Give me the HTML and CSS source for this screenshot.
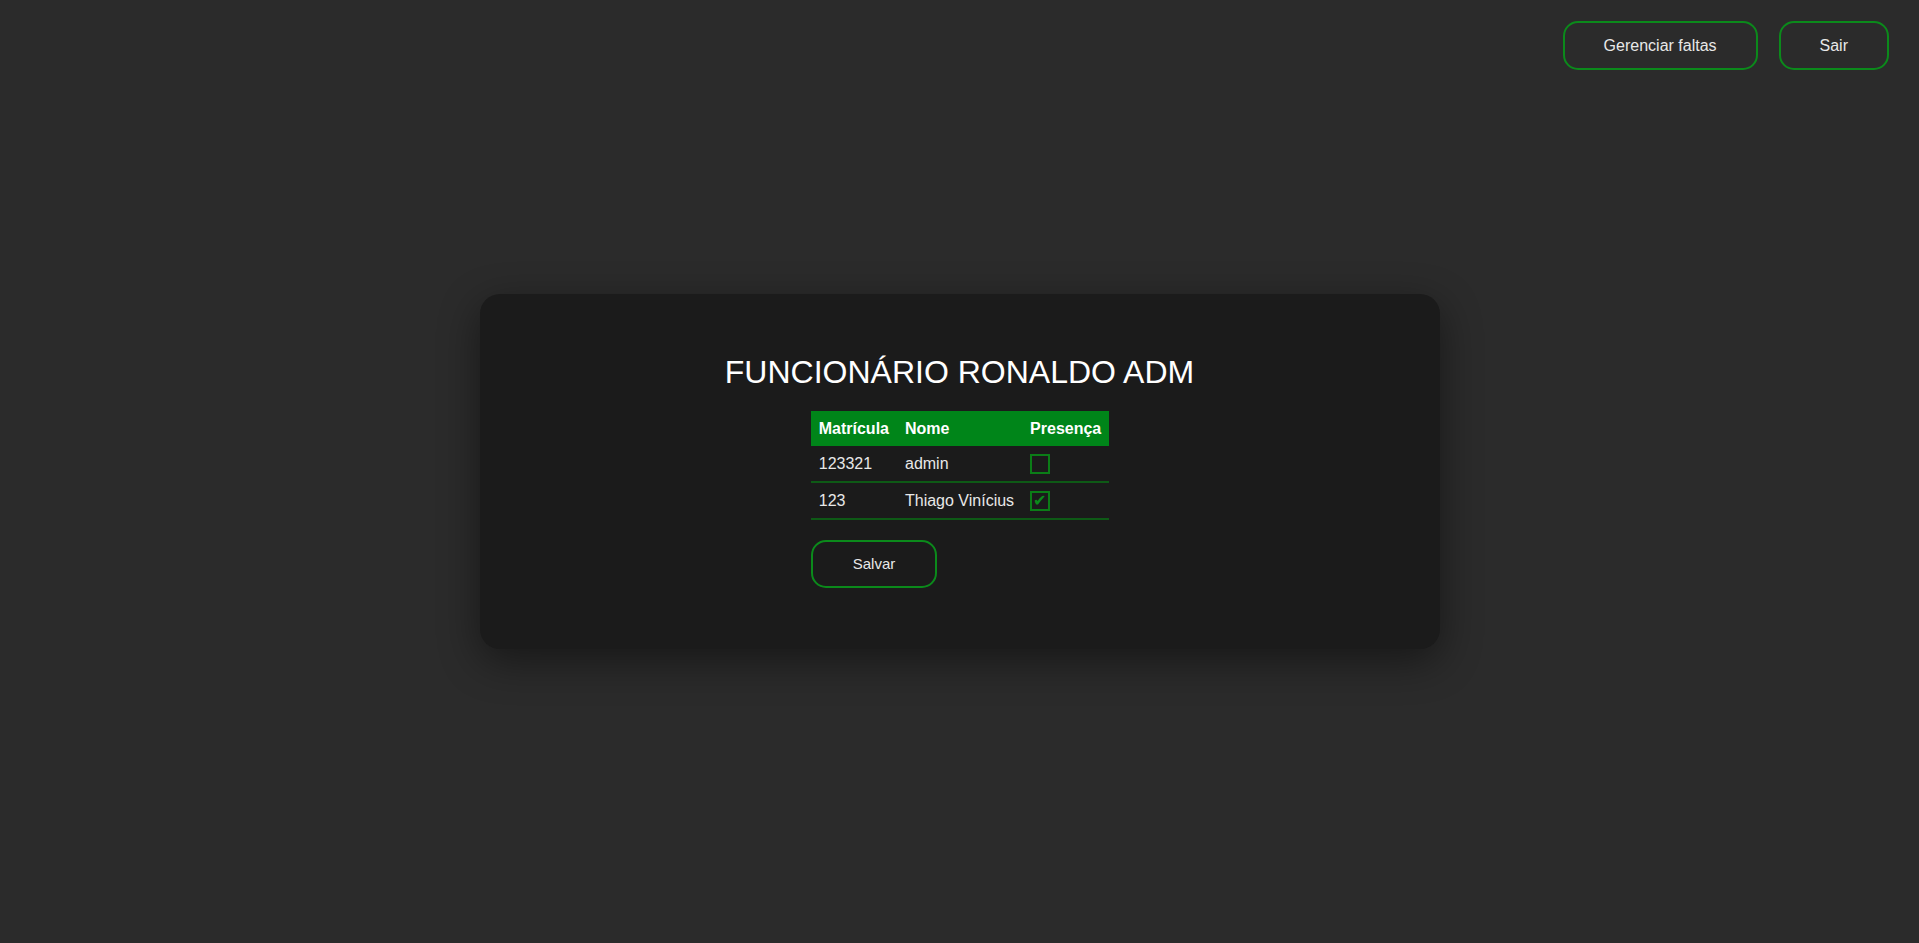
FILE: index.html
```html
<!DOCTYPE html>
<html lang="pt-BR">
<head>
<meta charset="utf-8">
<title>Presença</title>
<link rel="stylesheet" href="styles.css">
</head>
<body>
<header class="topbar">
  <button class="btn" type="button">Gerenciar faltas</button>
  <button class="btn" type="button">Sair</button>
</header>
<main class="stage">
  <section class="card">
    <h1 class="title">FUNCIONÁRIO RONALDO ADM</h1>
    <form class="attendance">
      <table class="grid">
        <thead>
          <tr><th>Matrícula</th><th>Nome</th><th>Presença</th></tr>
        </thead>
        <tbody>
          <tr><td>123321</td><td>admin</td><td><input class="check" type="checkbox"></td></tr>
          <tr><td>123</td><td>Thiago Vinícius</td><td><input class="check" type="checkbox" checked></td></tr>
        </tbody>
      </table>
      <button class="btn btn-save" type="button">Salvar</button>
    </form>
  </section>
</main>
</body>
</html>
```
FILE: styles.css
```css
html, body {
  margin: 0;
  padding: 0;
}
body {
  min-height: 100vh;
  display: flex;
  flex-direction: column;
  background: #2b2b2b;
  font-family: "Liberation Sans", Arial, sans-serif;
  color: #e8e8e8;
}
.topbar {
  display: flex;
  justify-content: flex-end;
  gap: 21px;
  padding: 21px 30px 19px 30px;
  height: 49px;
}
.btn {
  background: transparent;
  color: #e8e8e8;
  font-family: "Liberation Sans", Arial, sans-serif;
  font-size: 16px;
  line-height: 17px;
  padding: 14px 39px;
  border: 2px solid #0b8a1b;
  border-radius: 15px;
  cursor: pointer;
}
.stage {
  flex: 1;
  display: flex;
  align-items: center;
  justify-content: center;
  padding-bottom: 89px;
}
.card {
  width: 960px;
  box-sizing: border-box;
  padding: 40px;
  background: #1b1b1b;
  border-radius: 20px;
  box-shadow: 0 12px 40px rgba(0, 0, 0, 0.45);
  display: flex;
  flex-direction: column;
  align-items: center;
}
.title {
  margin: 20px 0 20px;
  font-size: 32px;
  line-height: 37px;
  font-weight: normal;
  color: #ffffff;
}
.attendance {
  display: flex;
  flex-direction: column;
  align-items: flex-start;
  gap: 20px;
  margin: 0 0 21px 1px;
}
.grid {
  border-collapse: collapse;
  border-spacing: 0;
  font-size: 16px;
}
.grid th {
  background: #008519;
  color: #ffffff;
  font-weight: bold;
  text-align: left;
  padding: 0 8px;
  height: 35px;
}
.grid td {
  padding: 0 8px;
  height: 35px;
  color: #e8e8e8;
  border-bottom: 2px solid #0e5a16;
  vertical-align: middle;
}
.check {
  appearance: none;
  -webkit-appearance: none;
  display: block;
  margin: 0;
  width: 20px;
  height: 20px;
  box-sizing: border-box;
  border: 2px solid #0b7d17;
  background: transparent;
  position: relative;
}
.check:checked::after {
  content: "\2714";
  position: absolute;
  left: 1px;
  top: 0;
  font-family: "DejaVu Sans", sans-serif;
  font-size: 16px;
  font-weight: bold;
  line-height: 16px;
  color: #0b8a1b;
}
.btn-save {
  font-size: 15px;
  line-height: 16px;
  padding: 14px 40px;
}
```
